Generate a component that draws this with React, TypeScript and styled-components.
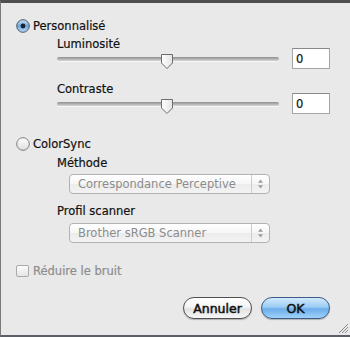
import React from 'react';
import styled, {createGlobalStyle} from 'styled-components';

const GlobalStyle = createGlobalStyle`
    html, body {
        margin: 0;
        padding: 0;
        background: #e9e9e9;
    }
    body {
        font-family: "DejaVu Sans", "Liberation Sans", sans-serif;
        font-size: 11.5px;
        color: #111;
    }
`;

const Sheet = styled.div`
    position: relative;
    box-sizing: border-box;
    width: 350px;
    height: 337px;
    background: #e9e9e9;
    border-top: 3px solid #4f4f4f;
    border-left: 1px solid #7a7a7a;
    border-bottom: 2px solid #5c5f66;
    padding: 16px 20px 16px 15px;
    display: flex;
    flex-direction: column;
    -webkit-text-stroke: 0.2px currentColor;
`;

const OptionRow = styled.label<{$top?: number; $disabled?: boolean}>`
    display: flex;
    align-items: center;
    gap: 3px;
    height: 14px;
    line-height: 14px;
    margin-top: ${p => p.$top ?? 0}px;
    color: ${p => (p.$disabled ? '#8c8c8c' : '#111')};
`;

const Section = styled.div`
    display: flex;
    flex-direction: column;
    padding-left: 41px;
`;

const FieldLabel = styled.div<{$top: number}>`
    line-height: 12px;
    height: 12px;
    margin-top: ${p => p.$top}px;
`;

const SliderRow = styled.div<{$top: number}>`
    display: flex;
    align-items: center;
    gap: 13px;
    height: 21px;
    margin-top: ${p => p.$top}px;
`;

const Track = styled.div`
    position: relative;
    flex: 1;
    height: 4px;
    border-radius: 2px;
    background: linear-gradient(#8f8f8f, #b9b9b9 60%, #d6d6d6);
    box-shadow: 0 1px 0 #f7f7f7;
`;

const Thumb = styled.svg`
    position: absolute;
    top: -4px;
    transform: translateX(-50%);
`;

const NumberField = styled.input`
    box-sizing: border-box;
    width: 38px;
    height: 21px;
    margin: 0;
    padding: 0 0 0 3px;
    border: 1px solid #a5a5a5;
    border-top-color: #8a8a8a;
    background: #fff;
    font: inherit;
    color: #111;
    outline: none;
`;

const Select = styled.div<{$top: number}>`
    box-sizing: border-box;
    display: flex;
    width: 201px;
    height: 20px;
    margin: ${p => p.$top}px 0 0 12px;
    border: 1px solid #b2b2b2;
    border-radius: 4px;
    background: linear-gradient(#ffffff, #f6f6f6 50%, #ececec 51%, #f3f3f3);
    color: #8c8c8c;
    line-height: 18px;
    -webkit-text-stroke: 0;
`;

const SelectText = styled.span`
    flex: 1;
    padding-left: 8px;
    white-space: nowrap;
`;

const SelectArrows = styled.span`
    display: flex;
    align-items: center;
    justify-content: center;
    width: 17px;
    border-left: 1px solid #cdcdcd;
`;

const CheckBox = styled.span`
    box-sizing: border-box;
    width: 13px;
    height: 12px;
    border: 1px solid #ababab;
    border-radius: 2px;
    background: linear-gradient(#fbfbfb, #e6e6e6);
`;

const ButtonRow = styled.div`
    display: flex;
    justify-content: flex-end;
    gap: 9px;
    margin-top: auto;
`;

const PillButton = styled.button<{$primary?: boolean; $width: number}>`
    box-sizing: border-box;
    width: ${p => p.$width}px;
    height: 22px;
    padding: 0;
    border-radius: 11px;
    border: 1px solid ${p => (p.$primary ? '#3b5c86' : '#505050')};
    background: ${p => p.$primary
        ? 'linear-gradient(#d3e9fd 0%, #9ccbf4 45%, #6dadea 55%, #9fd2fb 100%)'
        : 'linear-gradient(#ffffff 0%, #f4f4f4 45%, #e2e2e2 55%, #f7f7f7 100%)'};
    box-shadow: 0 1px 1px rgba(0, 0, 0, 0.25);
    font-family: "DejaVu Sans", "Liberation Sans", sans-serif;
    font-size: 12.5px;
    font-weight: 400;
    -webkit-text-stroke: 0.5px #111;
    color: #111;
`;

const Grip = styled.svg`
    position: absolute;
    right: 1px;
    bottom: 1px;
`;

function Radio({checked}: {checked?: boolean}) {
    return (
        <svg width="14" height="14" viewBox="0 0 14 14">
            <defs>
                <linearGradient id="rOn" x1="0" y1="0" x2="0" y2="1">
                    <stop offset="0" stopColor="#cfe3f6"/>
                    <stop offset="0.5" stopColor="#6fa6dc"/>
                    <stop offset="1" stopColor="#b9dcf8"/>
                </linearGradient>
                <linearGradient id="rOff" x1="0" y1="0" x2="0" y2="1">
                    <stop offset="0" stopColor="#ffffff"/>
                    <stop offset="1" stopColor="#dedede"/>
                </linearGradient>
            </defs>
            <circle cx="7" cy="7" r="6.3" fill={checked ? 'url(#rOn)' : 'url(#rOff)'}
                    stroke={checked ? '#4a5868' : '#7d7d7d'} strokeWidth="1"/>
            {checked && <circle cx="7" cy="7" r="2.4" fill="#1c2330"/>}
        </svg>
    );
}

function Slider({value}: {value: number}) {
    return (
        <Track>
            <Thumb width="14" height="17" viewBox="0 0 14 17" style={{left: `${value}%`}}>
                <defs>
                    <linearGradient id="thumbFill" x1="0" y1="0" x2="1" y2="0">
                        <stop offset="0" stopColor="#ffffff"/>
                        <stop offset="1" stopColor="#e4e4e4"/>
                    </linearGradient>
                </defs>
                <path d="M1.5 1.5 H12.5 V10 L7 15.5 L1.5 10 Z" fill="url(#thumbFill)"
                      stroke="#6d6d6d" strokeWidth="1" strokeLinejoin="round"/>
            </Thumb>
        </Track>
    );
}

function PopUp({label, top}: {label: string; top: number}) {
    return (
        <Select $top={top}>
            <SelectText>{label}</SelectText>
            <SelectArrows>
                <svg width="7" height="10" viewBox="0 0 7 10">
                    <path d="M3.5 0.5 L6 3.8 H1 Z" fill="#9a9a9a"/>
                    <path d="M3.5 9.5 L6 6.2 H1 Z" fill="#9a9a9a"/>
                </svg>
            </SelectArrows>
        </Select>
    );
}

export default function App() {
    return (
        <>
            <GlobalStyle/>
            <Sheet>
                <OptionRow>
                    <Radio checked/>
                    Personnalisé
                </OptionRow>
                <Section>
                    <FieldLabel $top={5}>Luminosité</FieldLabel>
                    <SliderRow $top={-2}>
                        <Slider value={49.5}/>
                        <NumberField defaultValue="0"/>
                    </SliderRow>
                    <FieldLabel $top={14}>Contraste</FieldLabel>
                    <SliderRow $top={-2}>
                        <Slider value={49.5}/>
                        <NumberField defaultValue="0"/>
                    </SliderRow>
                </Section>

                <OptionRow $top={23}>
                    <Radio/>
                    ColorSync
                </OptionRow>
                <Section>
                    <FieldLabel $top={6}>Méthode</FieldLabel>
                    <PopUp label="Correspondance Perceptive" top={5}/>
                    <FieldLabel $top={11}>Profil scanner</FieldLabel>
                    <PopUp label="Brother sRGB Scanner" top={6}/>
                </Section>

                <OptionRow $top={21} $disabled>
                    <CheckBox/>
                    <span style={{marginLeft: 1}}>Réduire le bruit</span>
                </OptionRow>

                <ButtonRow>
                    <PillButton $width={69}>Annuler</PillButton>
                    <PillButton $width={69} $primary>OK</PillButton>
                </ButtonRow>

                <Grip width="12" height="12" viewBox="0 0 12 12">
                    <path d="M11 2 L2 11 M11 5 L5 11 M11 8 L8 11" stroke="#8a8a8a" strokeWidth="1"/>
                </Grip>
            </Sheet>
        </>
    );
}
